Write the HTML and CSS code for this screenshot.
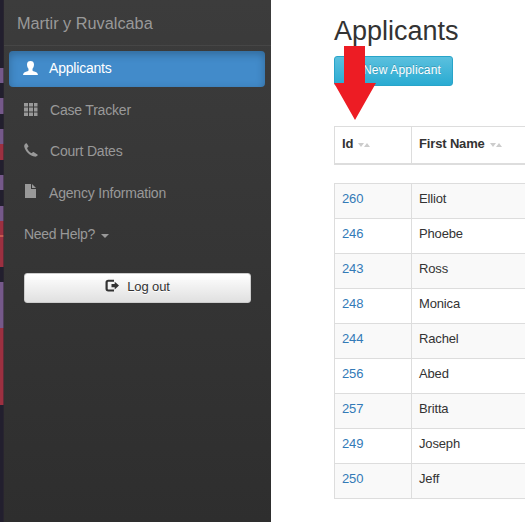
FILE: index.html
```html
<!DOCTYPE html>
<html lang="en">
<head>
<meta charset="utf-8">
<title>Applicants</title>
<link rel="stylesheet" href="styles.css">
</head>
<body>
<div class="backdrop"></div>
<aside class="sidebar">
  <div class="brand">Martir y Ruvalcaba</div>
  <nav class="menu">
    <a class="item active"><svg class="icon user" viewBox="0 0 15 14"><path d="M4 3.400C4 1.200 5.400 0 7.500 0S11 1.200 11 3.400c0 1.900-.7 3.500-1.500 4.400v1.600c.4.700 1.400.9 2.600 1.300 1.600.500 2.600 1.100 2.900 3.300H0c.3-2.200 1.300-2.800 2.900-3.300 1.200-.4 2.200-.6 2.600-1.300V7.800C4.700 6.900 4 5.300 4 3.400z"/></svg><span>Applicants</span></a>
    <a class="item tracker"><svg class="icon" viewBox="0 0 14 14"><path d="M0 1h4v3.500H0zM5 1h4v3.500H5zM10 1h3.500v3.500H10zM0 5.500h4v4H0zM5 5.500h4v4H5zM10 5.500h3.500v4H10zM0 10.500h4V14H0zM5 10.500h4V14H5zM10 10.500h3.500V14H10z"/></svg><span>Case Tracker</span></a>
    <a class="item dates"><svg class="icon" viewBox="0 0 14 14"><path d="M.3 2.200C.8.8 1.800.1 2.700.2l1.700 2.700c.2.4.1.800-.2 1L3 4.900c.7 2.200 2.200 4.100 4.500 5.300l1.300-.9c.4-.3.8-.2 1.100 0l3.500 2.100c.5.300.4.8.1 1.200-.7 1-1.800 1.400-3.200 1C5.400 12.300 1.500 8.300.4 4.200.2 3.500.1 2.800.3 2.200z"/></svg><span>Court Dates</span></a>
    <a class="item agency"><svg class="icon" viewBox="0 0 14 14"><path d="M1 0h6v5h5v9H1zM8 0l4 4H8z"/></svg><span>Agency Information</span></a>
    <a class="item help">Need Help?<i class="caret"></i></a>
  </nav>
  <button class="logout"><svg class="icon" viewBox="0 0 14 14"><path d="M9 .8H3.300C1.500.8.500 1.800.5 3.500v6.300c0 1.700 1 2.700 2.800 2.700H9v-2H3.700c-.7 0-1-.3-1-1V3.800c0-.7.300-1 1-1H9z"/><path d="M6.500 5h3.200V2.700L14 6.600l-4.300 4V8.300H6.500z"/></svg><span>Log out</span></button>
</aside>
<main class="content">
  <h1>Applicants</h1>
  <div class="actions">
    <button class="new">New Applicant</button>
    <svg class="arrow" viewBox="0 0 42 74"><path d="M10 0h21v37h11L21 74 0 37h10z"/></svg>
  </div>
  <div class="grid head">
    <div class="cell">Id<i class="sort"></i></div><div class="cell">First Name<i class="sort"></i></div>
  </div>
  <div class="grid rows">
    <div class="cell id">260</div><div class="cell">Elliot</div>
    <div class="cell id">246</div><div class="cell">Phoebe</div>
    <div class="cell id">243</div><div class="cell">Ross</div>
    <div class="cell id">248</div><div class="cell">Monica</div>
    <div class="cell id">244</div><div class="cell">Rachel</div>
    <div class="cell id">256</div><div class="cell">Abed</div>
    <div class="cell id">257</div><div class="cell">Britta</div>
    <div class="cell id">249</div><div class="cell">Joseph</div>
    <div class="cell id">250</div><div class="cell">Jeff</div>
  </div>
</main>
</body>
</html>
```
FILE: styles.css
```css
* { box-sizing: border-box; }

body {
  margin: 0;
  display: flex;
  height: 522px;
  overflow: hidden;
  background: #fff;
  color: #333;
  font: 13px/18px "Liberation Sans", Arial, sans-serif;
}

.backdrop {
  width: 4px;
  flex: none;
  border-right: 1px solid rgba(45, 40, 50, .55);
  background: linear-gradient(
    #221f2e 68px, #75598a 68px 83px, #221f2e 83px 98px, #75598a 98px 114px,
    #221f2e 114px 129px, #75598a 129px 144px, #9c3040 144px 160px,
    #221f2e 160px 175px, #75598a 175px 190px, #221f2e 190px 206px,
    #75598a 206px 221px, #9c3040 221px 235px, #c95a50 235px 237px,
    #9c3040 237px 267px, #221f2e 267px 282px, #75598a 282px 328px,
    #9c3040 328px 405px, #221f2e 405px);
}

.sidebar {
  width: 267px;
  flex: none;
  background: linear-gradient(#3c3c3c, #2e2e2e);
}

.brand {
  height: 46px;
  padding: 14px 13px 0;
  border-bottom: 1px solid #464646;
  color: #999;
  font-size: 16.300px;
}

.menu { padding: 5px 6px 0 5px; }

.item {
  display: flex;
  align-items: center;
  height: 36px;
  margin-bottom: 5px;
  padding-left: 15px;
  color: #999;
  font-size: 14px;
  letter-spacing: -.2px;
}

.item span { margin-left: 12px; }

.item.active {
  padding: 0 0 2px 14px;
  border-radius: 4px;
  background: #428bca;
  color: #fff;
  box-shadow: inset 0 3px 8px rgba(0, 0, 0, .25);
}

.item.active span { margin-left: 11px; }
.item.agency { margin: 6px 0 5px; }
.item.agency span { margin-left: 11px; }
.item.help { letter-spacing: -.3px; }

.icon {
  width: 14px;
  height: 14px;
  flex: none;
  fill: currentColor;
}

.icon.user { width: 15px; }
.tracker .icon,
.dates .icon { margin-bottom: 2px; }
.agency .icon { margin-bottom: 4px; }

.caret {
  margin: 3px 0 0 6px;
  border: 4px solid transparent;
  border-top-color: currentColor;
  border-bottom: 0;
}

.logout {
  display: flex;
  justify-content: center;
  width: 227px;
  height: 30px;
  margin: 16px 0 0 20px;
  padding: 5px 0 0;
  border: 1px solid #ccc;
  border-radius: 3px;
  background: linear-gradient(#fff, #e0e0e0);
  color: #333;
  font: inherit;
  line-height: 16px;
  letter-spacing: -.1px;
  text-shadow: 0 1px 0 #fff;
}

.menu + .logout { margin-top: 21px; }
.logout span { margin-left: 8px; }

.content {
  width: 254px;
  flex: none;
  padding-left: 63px;
}

h1 {
  margin: 0;
  padding-top: 16px;
  height: 56px;
  font-size: 27px;
  font-weight: 400;
  line-height: 31px;
}

.actions { position: relative; height: 70px; }

.new {
  width: 119px;
  height: 30px;
  padding: 0 0 2px 17px;
  border: 1px solid #28a4c9;
  border-radius: 3px;
  background: linear-gradient(#5bc0de, #2aabd2);
  color: #fff;
  font: 12px/18px "Liberation Sans", Arial, sans-serif;
  letter-spacing: .15px;
  text-shadow: 0 -1px 0 rgba(0, 0, 0, .2);
}

.arrow {
  position: absolute;
  left: 0;
  top: -10px;
  width: 42px;
  height: 74px;
  fill: #ed1c24;
}

.grid {
  display: grid;
  grid-template-columns: 78px 113px;
  border-top: 1px solid #ddd;
}

.cell {
  height: 35px;
  padding: 6px 7px;
  border-bottom: 1px solid #ddd;
  letter-spacing: -.15px;
}

.cell:nth-child(odd) {
  border-left: 1px solid #ddd;
  border-right: 1px solid #ddd;
}

.head .cell {
  height: 38px;
  padding-top: 8px;
  border-bottom-width: 2px;
  font-weight: 700;
}

.rows { margin-top: 18px; }
.rows .cell:nth-child(4n + 1),
.rows .cell:nth-child(4n + 2) { background: #f9f9f9; }
.id { color: #337ab7; }

.sort {
  display: inline-flex;
  margin-left: 5px;
  vertical-align: 1px;
}

.sort::before,
.sort::after {
  content: "";
  border: 3.500px solid transparent;
  border-top: 4px solid #ccc;
  border-bottom: 0;
}

.sort::after {
  border-top: 0;
  border-bottom: 4px solid #ccc;
}
```
